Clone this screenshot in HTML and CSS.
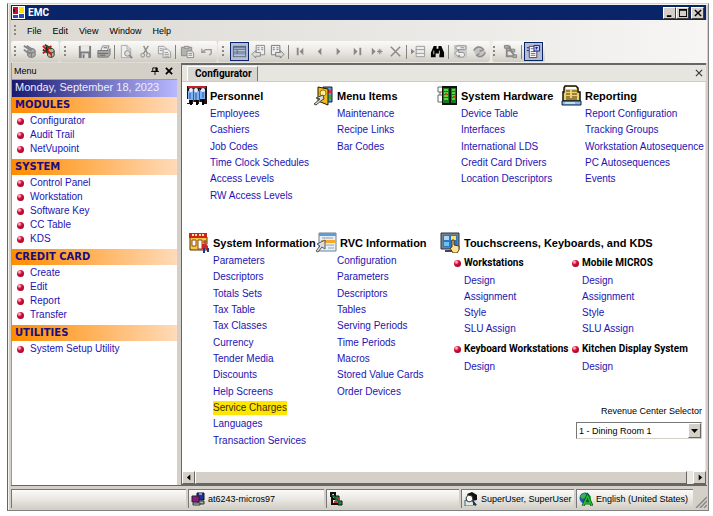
FILE: index.html
```html
<!DOCTYPE html>
<html lang="en">
<head>
<meta charset="utf-8">
<title>EMC</title>
<link rel="stylesheet" href="styles.css">
</head>
<body>
<div class="window">
  <header class="titlebar">
    <svg class="app-icon" viewBox="0 0 13 13"><path fill="#fff" d="M0 0h13v13H0z"/><path fill="#c8102e" d="M1 1h5v7H1z"/><path fill="#ffe000" d="M7 1h5v6H7z"/><path fill="#2848c8" d="M1 9h5v3H1zM7 8h5v4H7z"/><path fill="#222" d="M1 3h2v3H1z"/></svg>
    <h1 class="title">EMC</h1>
    <div class="caption-buttons">
      <button class="caption" aria-label="Minimize"><svg viewBox="0 0 9 9"><path d="M1 7h5v2H1z"/></svg></button>
      <button class="caption" aria-label="Maximize"><svg viewBox="0 0 9 9"><path d="M0 0h9v9H0zM1 2v6h7V2z" fill-rule="evenodd"/></svg></button>
      <button class="caption close" aria-label="Close"><svg viewBox="0 0 9 9"><path d="M1 1l7 7M8 1L1 8" stroke="#000" stroke-width="1.6"/></svg></button>
    </div>
  </header>

  <nav class="menubar">
    <span class="grip"></span>
    <button>File</button><button>Edit</button><button>View</button><button>Window</button><button>Help</button>
  </nav>

  <div class="toolbars">
    <div class="toolbar first">
      <span class="grip"></span>
      <button aria-label="Connect"><svg viewBox="0 0 16 16"><g fill="#aaa" stroke="#777"><path d="M6 7c0-3 8-3 8 0v5c0 3-8 3-8 0z"/><path d="M6 8c1 2 7 2 8 0M10 9v5" fill="none"/></g><path d="M2 2l8 5M2 6l6 5M5 2l6 4" stroke="#888" stroke-width="2"/></svg></button>
      <button aria-label="Disconnect"><svg viewBox="0 0 16 16"><path d="M7 7c0-3 7-3 7 0v5c0 3-7 3-7 0z" fill="#bdb69b" stroke="#333"/><path d="M7 8c1 2 6 2 7 0M11 10v4" stroke="#333" fill="none"/><path d="M4 1l7 4M2 6l6 4" stroke="#174f22" stroke-width="2"/><path d="M2 2l9 9M11 2L2 10" stroke="#d01010" stroke-width="2"/><path d="M6 3v5" stroke="#222" stroke-width="2"/></svg></button>
    </div>
    <div class="toolbar edit">
      <span class="grip"></span>
      <button aria-label="Save"><svg viewBox="0 0 16 16"><path d="M2 2h13v13H2z" fill="#7d7d7d"/><path d="M4 2h9v6H4z" fill="#e8e8e6"/><path d="M5 10h7v5H5z" fill="#ddd"/><path d="M6 11h2v4H6z" fill="#777"/></svg></button>
      <button aria-label="Print"><svg viewBox="0 0 16 16"><path d="M5 7l2-5h7l-2 5z" fill="#eee" stroke="#888"/><path d="M2 7h11l2-2v6l-2 3H2z" fill="#aaa" stroke="#777"/><path d="M2 10h11M4 12h6M8 4h4" stroke="#666"/></svg></button>
      <i class="sep"></i>
      <button aria-label="Print preview"><svg viewBox="0 0 16 16"><path d="M2.500 1.500h6l4 4v9h-10zM8.500 1.500v4h4" fill="#eee" stroke="#aaa"/><circle cx="9" cy="10" r="3" fill="#ddd" stroke="#888"/><path d="M11 12l3 3" stroke="#888" stroke-width="2"/></svg></button>
      <button aria-label="Cut"><svg viewBox="0 0 16 16" fill="none" stroke="#888"><path d="M6 2l4 8M11 2L6 10" stroke-width="1.400"/><circle cx="5" cy="12" r="2"/><circle cx="11" cy="12" r="2"/></svg></button>
      <button aria-label="Copy"><svg viewBox="0 0 16 16" fill="#eee" stroke="#999"><path d="M1.500 2.500h6l2 2v6h-8z"/><path d="M6.500 5.500h5l3 3v6h-8z"/><path d="M3 5h3M3 7h3M8 9h4M8 11h5M8 13h5"/></svg></button>
      <i class="sep"></i>
      <button aria-label="Paste"><svg viewBox="0 0 16 16" stroke="#888"><path d="M1.500 3.500h11v9h-11z" fill="#b2b2b0"/><path d="M4.500 4.500v-2h5v2z" fill="#ddd"/><path d="M7.500 7.500h5l2 2v5h-7z" fill="#eee"/><path d="M9 10h4M9 12h4"/></svg></button>
      <button aria-label="Undo"><svg viewBox="0 0 16 16" fill="none" stroke="#999"><path d="M3 9l4-3h6v4l-2 2M3 5v4h4" stroke-width="1.400"/></svg></button>
    </div>
    <div class="toolbar">
      <span class="grip"></span>
      <button class="on" aria-label="Table view"><svg viewBox="0 0 16 16"><path d="M1 2h14v12H1z" fill="#5b6784"/><path d="M2 4h12v1H2zM2 6h3v2H2zM6 6h8v2H6zM2 9h3v1H2zM6 9h8v1H6zM2 11h12v2H2z" fill="#b8c3da"/></svg></button>
      <button aria-label="Previous form"><svg viewBox="0 0 16 16"><path d="M5.500 1.500h9v10h-9z" fill="#eee" stroke="#888"/><path d="M7 4h2M11 4h2M7 6h2M11 6h2" stroke="#777"/><path d="M1 11l4-4v2h5v4H5v2z" fill="#ddd" stroke="#888"/></svg></button>
      <button aria-label="Next form"><svg viewBox="0 0 16 16"><path d="M1.500 1.500h9v10h-9z" fill="#eee" stroke="#777"/><path d="M3 4h2M7 4h2M3 6h2M7 6h2" stroke="#777"/><path d="M15 11l-4-4v2H6v4h5v2z" fill="#ddd" stroke="#777"/></svg></button>
      <i class="sep"></i>
      <button aria-label="First"><svg viewBox="0 0 16 16" fill="#888"><path d="M4 4h2v8H4zM11 4v8L7 8z"/></svg></button>
      <button aria-label="Previous"><svg viewBox="0 0 16 16" fill="#888"><path d="M10 4v8L6 8z"/></svg></button>
      <button aria-label="Next"><svg viewBox="0 0 16 16" fill="#888"><path d="M6 4v8l4-4z"/></svg></button>
      <button aria-label="Last"><svg viewBox="0 0 16 16" fill="#888"><path d="M4 4v8l4-4zM10 4h2v8h-2z"/></svg></button>
      <button aria-label="New record"><svg viewBox="0 0 16 16" fill="#888"><path d="M3 4v8l4-4z"/><path d="M11.500 5v6M8.500 8h6M9.500 6l4 4M13.500 6l-4 4" stroke="#888"/></svg></button>
      <button aria-label="Delete"><svg viewBox="0 0 16 16"><path d="M3 3l10 10M13 3L3 13" stroke="#888" stroke-width="1.500"/></svg></button>
      <i class="sep"></i>
      <button aria-label="Insert row"><svg viewBox="0 0 16 16"><path d="M5.500 2.500h9v11h-9zM5 6h9M5 10h9" fill="#eee" stroke="#999"/><path d="M0 5l4 3-4 3z" fill="#888"/></svg></button>
      <button aria-label="Find"><svg viewBox="0 0 16 16"><path d="M4 2h3v3h2V2h3l3 7v5h-5v-4H6v4H1V9z" fill="#000"/><path d="M4 7v4M10 7v4" stroke="#ccc"/></svg></button>
      <i class="sep"></i>
      <button aria-label="Routing"><svg viewBox="0 0 16 16" fill="#eee" stroke="#888"><path d="M1 1h14v14H1z" fill="#ccc" stroke="none"/><rect x="3" y="2" width="11" height="4" rx="2"/><path d="M2 10l4-4v3h4c3 0 3 5 0 5H7v-2H6v2z"/><path d="M8 4h4"/></svg></button>
      <button aria-label="Refresh"><svg viewBox="0 0 16 16"><path d="M1 6l6-4 6 3 2 5-4 5-6-2z" fill="#c4c4c2"/><path d="M2 7c2-5 8-5 10-1l-4 2M14 9c-1 4-6 6-9 3l3-2" fill="none" stroke="#8c8c8c" stroke-width="1.600"/></svg></button>
    </div>
    <div class="toolbar last">
      <span class="grip"></span>
      <button aria-label="Hierarchy"><svg viewBox="0 0 16 16" fill="#aaa" stroke="#888"><path d="M4 1v12h10M4 7h6" fill="none" stroke-width="2"/><path d="M1.500 1.500h5v3h-5zM8.500 5.500h4v3h-4zM10.500 11.500h4v3h-4z"/><path d="M6 4l6 8M7 2l1 4" stroke-width="2"/></svg></button>
      <i class="sep"></i>
      <button class="on" aria-label="Properties"><svg viewBox="0 0 16 16"><path d="M3.500 2.500h8v12h-8z" fill="#fff" stroke="#444"/><path d="M5 5h3M5 8h5M5 10h5M5 12h5" stroke="#667"/><path d="M8.500 1.500h6v6h-6z" fill="#cfd6f2" stroke="#11119b"/><path d="M10 4h3M11 3v3M1 4h2M1 7h2" stroke="#11119b"/></svg></button>
    </div>
  </div>

  <div class="body">
    <aside class="sidebar">
      <div class="panel-head">
        <h2>Menu</h2>
        <button aria-label="Pin"><svg viewBox="0 0 9 9"><path d="M2 1h5v4H2zM0 5h9M4.500 5v4" fill="none" stroke="#000"/><path d="M5 1h2v4H5z"/></svg></button>
        <button aria-label="Close menu"><svg viewBox="0 0 9 9"><path d="M1 1l7 7M8 1L1 8" stroke="#000" stroke-width="2"/></svg></button>
      </div>
      <p class="date">Monday, September 18, 2023</p>
      <h3>MODULES</h3>
      <ul><li><a href="#">Configurator</a></li><li><a href="#">Audit Trail</a></li><li><a href="#">NetVupoint</a></li></ul>
      <h3>SYSTEM</h3>
      <ul><li><a href="#">Control Panel</a></li><li><a href="#">Workstation</a></li><li><a href="#">Software Key</a></li><li><a href="#">CC Table</a></li><li><a href="#">KDS</a></li></ul>
      <h3>CREDIT CARD</h3>
      <ul><li><a href="#">Create</a></li><li><a href="#">Edit</a></li><li><a href="#">Report</a></li><li><a href="#">Transfer</a></li></ul>
      <h3>UTILITIES</h3>
      <ul><li><a href="#">System Setup Utility</a></li></ul>
    </aside>

    <main class="main">
      <div class="tabs">
        <button class="tab">Configurator</button>
        <button class="tab-close" aria-label="Close tab"><svg viewBox="0 0 9 9"><path d="M1 1l7 7M8 1L1 8" stroke="#333" stroke-width="1.200"/></svg></button>
      </div>
      <div class="content">
        <div class="row top">
          <section>
            <h2><svg viewBox="0 0 21 21"><path d="M1 1h20v18H1z" fill="#201414"/><path d="M2 1h18v2H2z" fill="#c52020"/><path d="M7 4h1v14H7zM13 4h1v13h-1z" fill="#a33"/><g fill="#7fb2ee"><path d="M2 6h5v9H2zM8 6h5v9H8zM14 5h5v9h-5z"/></g><g fill="#e8f2ff"><circle cx="5" cy="5" r="2"/><circle cx="10" cy="5" r="2"/><circle cx="17" cy="5" r="2"/></g><path d="M4 8v6M10 8v7M17 7v6" stroke="#2a55a8"/><path d="M0 14h3v4H0zM7 17h3v4H7zM13 17h3v4h-3zM0 19h4v2H0z" fill="#fff"/><path d="M5 15v5M11 15v5M17 14v6" stroke="#000" stroke-width="2"/></svg>Personnel</h2>
            <ul class="six"><li><a href="#">Employees</a></li><li><a href="#">Cashiers</a></li><li><a href="#">Job Codes</a></li><li><a href="#">Time Clock Schedules</a></li><li><a href="#">Access Levels</a></li><li><a href="#">RW Access Levels</a></li></ul>
          </section>
          <section>
            <h2><svg viewBox="0 0 21 21"><path d="M10 2h9v15h-9z" fill="#4c9ad8" stroke="#123"/><path d="M15 5h3v3h-3z" fill="#dd3030"/><path d="M15 10h3v4h-3z" fill="#3faa44"/><path d="M5 2l10 2v16L5 16z" fill="#f2b818" stroke="#221a00"/><circle cx="10" cy="8" r="3" fill="#fff2a0" stroke="#a86a00"/><path d="M1 19l6-5-4-1 7-3 1 4-2 1-6 5z" fill="#ddd" stroke="#444"/></svg>Menu Items</h2>
            <ul class="six"><li><a href="#">Maintenance</a></li><li><a href="#">Recipe Links</a></li><li><a href="#">Bar Codes</a></li></ul>
          </section>
          <section>
            <h2><svg viewBox="0 0 21 21"><path d="M5 1h15v19H5z" fill="#111"/><path d="M6 3h6v15H6zM14 3h5v15h-5z" fill="#157a20"/><path d="M7 5h4M7 8h4M7 11h4M7 14h4M15 5h3M15 8h3M15 11h3M15 14h3" stroke="#7cf04c" stroke-width="1.500"/><path d="M9 8v2M17 11v2" stroke="#e03a20" stroke-width="2"/><path d="M5 2H1v5h4M5 10H1v7h4M3 7v3" fill="none" stroke="#666"/></svg>System Hardware</h2>
            <ul class="six"><li><a href="#">Device Table</a></li><li><a href="#">Interfaces</a></li><li><a href="#">International LDS</a></li><li><a href="#">Credit Card Drivers</a></li><li><a href="#">Location Descriptors</a></li></ul>
          </section>
          <section>
            <h2><svg viewBox="0 0 21 21"><path d="M4 1h11l2 2v4h2v9H2V7h1V3z" fill="#eed070" stroke="#111" stroke-width="1.500"/><path d="M5 2h10v2H5z" fill="#fff"/><path d="M5 6h4M11 6h5M5 9h4M11 9h5M5 12h4M11 12h5M5 14h11" stroke="#4a3200"/><path d="M1 16h19v4H1z" fill="#85b8e4" stroke="#0a2038"/><path d="M4 18h10" stroke="#fff"/></svg>Reporting</h2>
            <ul class="six"><li><a href="#">Report Configuration</a></li><li><a href="#">Tracking Groups</a></li><li><a href="#">Workstation Autosequence</a></li><li><a href="#">PC Autosequences</a></li><li><a href="#">Events</a></li></ul>
          </section>
        </div>
        <div class="row bottom">
          <section>
            <h2><svg viewBox="0 0 21 21"><path d="M1 5h17v13H1z" fill="#f5c742" stroke="#5a3300"/><path d="M0 1h18v5H0z" fill="#cf2415"/><path d="M3 3h2M6 3h2M10 3h2M13 3h2" stroke="#ffd9b0" stroke-width="2"/><path d="M3 8h4v6H3zM9 8h4v9H9z" fill="#fff" stroke="#8a4a10"/><circle cx="16" cy="10" r="2" fill="#a35c35"/><path d="M13 12h6v5h-6z" fill="#d32323"/><path d="M14 16h2v5h-2zM18 16h2v4h-2z" fill="#203a91"/><path d="M18 12l2 3" stroke="#fff"/></svg>System Information</h2>
            <ul class="twelve"><li><a href="#">Parameters</a></li><li><a href="#">Descriptors</a></li><li><a href="#">Totals Sets</a></li><li><a href="#">Tax Table</a></li><li><a href="#">Tax Classes</a></li><li><a href="#">Currency</a></li><li><a href="#">Tender Media</a></li><li><a href="#">Discounts</a></li><li><a href="#">Help Screens</a></li><li><a class="marked" href="#">Service Charges</a></li><li><a href="#">Languages</a></li><li><a href="#">Transaction Services</a></li></ul>
          </section>
          <section>
            <h2><svg viewBox="0 0 21 21"><path d="M3 1h17v18H3z" fill="#e5f0fa" stroke="#6d8093"/><path d="M3 1h17v3H3z" fill="#5f9cd3"/><path d="M6 6h11" stroke="#999"/><path d="M5 8h15v3H5z" fill="#f7a828"/><path d="M10 13h8M12 16h6" stroke="#8aa" /><path d="M9 8v9l-3-2-4 5-2-1 4-5-3-2z" fill="#ddd" stroke="#555"/></svg>RVC Information</h2>
            <ul class="twelve tight"><li><a href="#">Configuration</a></li><li><a href="#">Parameters</a></li><li><a href="#">Descriptors</a></li><li><a href="#">Tables</a></li><li><a href="#">Serving Periods</a></li><li><a href="#">Time Periods</a></li><li><a href="#">Macros</a></li><li><a href="#">Stored Value Cards</a></li><li><a href="#">Order Devices</a></li></ul>
          </section>
          <section>
            <h2><svg viewBox="0 0 21 21"><path d="M1 1h18v16H1z" fill="#73808e" stroke="#2c3640"/><path d="M3 3h14v12H3z" fill="#2e74c4"/><path d="M4 4h5v4H4z" fill="#a8d8f5"/><path d="M11 4h5v4h-5z" fill="#f5e266"/><path d="M4 10h5v4H4z" fill="#6cc4e8"/><path d="M5 18h11v2H5z" fill="#445"/><path d="M12 8l2 0v5l5 1v4l-2 3h-4l-3-5 2-1z" fill="#ffe09a" stroke="#5a3a00"/></svg>Touchscreens, Keyboards, and KDS</h2>
            <div class="groups">
              <div class="group"><h3>Workstations</h3><ul><li><a href="#">Design</a></li><li><a href="#">Assignment</a></li><li><a href="#">Style</a></li><li><a href="#">SLU Assign</a></li></ul></div>
              <div class="group"><h3>Mobile MICROS</h3><ul><li><a href="#">Design</a></li><li><a href="#">Assignment</a></li><li><a href="#">Style</a></li><li><a href="#">SLU Assign</a></li></ul></div>
              <div class="group"><h3>Keyboard Workstations</h3><ul><li><a href="#">Design</a></li></ul></div>
              <div class="group"><h3>Kitchen Display System</h3><ul><li><a href="#">Design</a></li></ul></div>
            </div>
            <div class="selector">
              <label for="rvc">Revenue Center Selector</label>
              <div class="select-box">
                <select id="rvc"><option>1 - Dining Room 1</option></select>
                <span class="drop"><svg viewBox="0 0 7 4"><path d="M0 0h7L3.500 4z"/></svg></span>
              </div>
            </div>
          </section>
        </div>
      </div>
      <div class="scrollbar">
        <button aria-label="Scroll left"><svg viewBox="0 0 7 7"><path d="M5 0v7L1 3.500z"/></svg></button>
        <span class="thumb"></span>
        <button aria-label="Scroll right"><svg viewBox="0 0 7 7"><path d="M2 0v7l4-3.500z"/></svg></button>
      </div>
    </main>
  </div>

  <footer class="statusbar">
    <div class="pane message"></div>
    <div class="pane host"><svg viewBox="0 0 14 14"><path d="M6 1h7v7H6z" fill="#1d2f9c" stroke="#112"/><path d="M7 9h6v3H7z" fill="#aaa" stroke="#333"/><path d="M1 4h7v6H1z" fill="#8d1689" stroke="#222"/><path d="M2 11h7v2H2z" fill="#ccc" stroke="#333"/><path d="M8 2h3" stroke="#fff"/></svg>at6243-micros97</div>
    <div class="pane task"><svg viewBox="0 0 14 14"><path d="M2 1h4v3H2zM3 4v8h9M3 7h5" fill="none" stroke="#111" stroke-width="2"/><path d="M6 4h4v4H6zM9 9h4v4H9z" fill="#139247" stroke="#111"/><path d="M3 3l8 7" stroke="#126b33" stroke-width="2"/><path d="M5 9h3v2H5zM9 6h2v2H9z" fill="#d03030"/></svg></div>
    <div class="pane user"><svg viewBox="0 0 14 14"><path d="M3 2l5-2 5 3v5l-5 1z" fill="#111"/><path d="M4 3l4 1 1 4-3 2-3-1-1-3z" fill="#fff" stroke="#333"/><path d="M1 8l4 2 3-1 4 5H1z" fill="#e8e8e8" stroke="#3b6470"/><path d="M9 8l4 5h-4z" fill="#173a55"/></svg>SuperUser, SuperUser</div>
    <div class="pane lang"><svg viewBox="0 0 14 14"><circle cx="6" cy="6" r="5.500" fill="#1c53b4"/><path d="M1 4l4-3 3 2-2 3-3 1zM8 5l4-1v4z" fill="#3cb24a"/><path d="M4 14L8.500 4 13 14M6 11h5" fill="none" stroke="#065e12" stroke-width="3"/><path d="M4 14L8.500 4 13 14M6 11h5" fill="none" stroke="#28bd3e" stroke-width="1.500"/></svg>English (United States)</div>
    <svg class="resize" viewBox="0 0 12 12"><path d="M1 12L12 1M5 12l7-7M9 12l3-3" stroke="#888" stroke-width="1.500"/></svg>
  </footer>
</div>
</body>
</html>
```
FILE: styles.css
```css
* { box-sizing: border-box; }

body {
  margin: 0;
  height: 100vh;
  padding: 3px 4px 5px 7px;
  background: #fff;
  font: 10px/16px "Liberation Sans", Arial, sans-serif;
  color: #000;
}

h1, h2, h3, p, ul { margin: 0; padding: 0; }
ul { list-style: none; }
a { color: #1c14b4; text-decoration: none; }
button {
  display: flex;
  align-items: center;
  justify-content: center;
  padding: 0;
  border: 0;
  background: none;
  font: inherit;
  color: inherit;
}
svg { display: block; flex: none; }

.window {
  height: 100%;
  display: flex;
  flex-direction: column;
  padding: 1px 1px 2px 3px;
  background: #d4d0c8;
  border: 1px solid #808080;
  border-left-color: #3f6ea8;
  border-top-color: #d4d0c8;
  box-shadow: inset 1px 1px #f4f3f0;
}

/* Title bar */
.titlebar {
  display: flex;
  align-items: center;
  gap: 3px;
  height: 15px;
  margin-right: 1px;
  padding: 0 2px 0 1px;
  background: #0a246a;
  color: #fff;
}
.app-icon { width: 13px; height: 13px; }
.title { flex: 1; font: bold 10px/15px Roboto, "Liberation Sans", sans-serif; }
.caption-buttons { display: flex; }
.caption {
  width: 13px;
  height: 12px;
  background: #d4d0c8;
  border: 1px solid;
  border-color: #fff #404040 #404040 #fff;
}
.caption.close { margin-left: 2px; }
.caption svg { width: 8px; height: 8px; }

/* Menu bar and toolbars */
.menubar, .toolbars { background: linear-gradient(90deg, #dcd9d2, #eeedea 75%, #f7f6f4); }
.menubar { display: flex; align-items: center; height: 21px; padding-left: 3px; font-size: 9px; }
.menubar button { margin-right: 11px; }
.menubar .grip { margin-right: 11px; }
.grip {
  flex: none;
  width: 2px;
  height: 12px;
  background: repeating-linear-gradient(#8a8780 0 2px, transparent 2px 4px);
}
.toolbars { display: flex; height: 22px; padding-bottom: 1px; }
.toolbar {
  display: flex;
  align-items: center;
  margin-right: 1px;
  padding: 0 1px 0 4px;
  border-radius: 3px;
  background: linear-gradient(#fbfaf9, #eae8e3 50%, #d0ccc3);
}
.toolbar.first { padding-left: 3px; }
.toolbar.last { margin-left: 1px; padding: 0 2px 0 1px; }
.toolbar .grip { margin-right: 6px; }
.toolbar.first .grip { margin-right: 4px; }
.toolbar.edit .grip { margin-right: 9px; }
.toolbar button { width: 19px; height: 19px; }
.toolbar svg { width: 15px; height: 15px; }
.toolbar .on { border: 1px solid #0a246a; background: #b6bdd2; }
.sep { width: 1px; height: 14px; margin: 0 2px 0 1px; background: #85827b; }

/* Work area */
.body { flex: 1; display: flex; min-height: 0; gap: 4px; padding-right: 1px; }
.sidebar { flex: none; width: 166px; background: #fff; border-left: 1px solid #999; }
.panel-head {
  display: flex;
  align-items: center;
  gap: 6px;
  height: 17px;
  padding: 0 4px 0 2px;
  background: #d4d0c8;
  border-bottom: 1px solid #999;
}
.panel-head h2 { flex: 1; font-size: 9px; font-weight: 400; }
.panel-head svg { width: 8px; height: 8px; }
.date {
  height: 17px;
  padding-left: 3px;
  background: linear-gradient(90deg, #191970, #b8b8ff);
  color: #eef;
  font-size: 11px;
  line-height: 14px;
}
.sidebar h3 {
  height: 16px;
  padding-left: 3px;
  background: linear-gradient(90deg, #ff8c00, #ffdab9);
  color: #1a0d80;
  font: bold 10px/15px "DejaVu Sans", Verdana, sans-serif;
}
.sidebar ul { padding: 1px 0 3px 5px; }
.sidebar li { line-height: 14px; }
.sidebar li, .group h3 { display: flex; align-items: center; gap: 6px; }
.sidebar li::before, .group h3::before {
  content: "";
  flex: none;
  width: 7px;
  height: 7px;
  border-radius: 50%;
  background: radial-gradient(circle at 35% 30%, #ffb0c0 0 10%, #d8103c 35%, #7c0020);
}

.main {
  flex: 1;
  min-width: 0;
  display: flex;
  flex-direction: column;
  border: 1px solid #666;
  border-width: 2px 0 1px 1px;
}
.tabs {
  display: flex;
  align-items: flex-end;
  height: 17px;
  flex: none;
  padding: 0 3px 0 5px;
  background: #e7e5e0;
  border-bottom: 1px solid #cfcbc3;
}
.tab {
  height: 15px;
  padding: 0 5px 0 7px;
  background: #d9d6cf;
  border: solid;
  border-color: #fff #777 #777 #fff;
  border-width: 1px 1px 0 1px;
  font: bold 10px/14px Roboto, "Liberation Sans", sans-serif;
}
.tab-close { height: 16px; margin-left: auto; }
.tab-close svg { width: 8px; height: 8px; }

.content {
  flex: 1;
  min-height: 0;
  overflow: hidden;
  padding-top: 3px;
  background: #fff;
  border-right: 1px solid #e8e6e1;
}
.row { display: grid; white-space: nowrap; }
.row.top { grid-template-columns: 127px 124px 124px 1fr; padding-left: 4px; margin-bottom: 28px; }
.row.bottom { grid-template-columns: 127px 124px 1fr; padding-left: 7px; }
.row h2 {
  display: flex;
  align-items: center;
  gap: 3px;
  height: 21px;
  font-size: 11px;
}
.row h2 svg { width: 21px; height: 21px; }
.row li { display: flex; align-items: center; }
.six, .twelve { display: grid; padding-left: 24px; }
.six { height: 98px; grid-template-rows: repeat(6, 1fr); }
.twelve { height: 196px; grid-template-rows: repeat(12, 1fr); }
.tight { padding-left: 21px; }
.marked { background: #ffe600; color: #33300a; line-height: 14px; }

.groups { display: grid; grid-template-columns: 118px 1fr; row-gap: 2px; padding-left: 14px; }
.group h3 { gap: 3px; height: 20px; font: bold 10px/16px Roboto, "Liberation Sans", sans-serif; }
.group ul { padding-left: 10px; }
.selector {
  display: flex;
  flex-direction: column;
  align-items: flex-end;
  gap: 3px;
  margin-top: 28px;
  padding-right: 3px;
  font-size: 9px;
}
.select-box { display: flex; width: 126px; height: 17px; border: 1px solid; border-color: #777 #d4d0c8 #d4d0c8 #777; }
.select-box select {
  flex: 1;
  min-width: 0;
  appearance: none;
  border: 0;
  padding: 0 2px;
  background: #fff;
  color: #000;
  font: inherit;
}
.drop, .scrollbar button, .thumb {
  background: #d4d0c8;
  border: 1px solid;
  border-color: #fff #666 #666 #fff;
}
.drop { display: flex; align-items: center; justify-content: center; width: 13px; }
.drop svg { width: 7px; height: 4px; }

.scrollbar { flex: none; display: flex; height: 13px; background: #eae8e4; }
.scrollbar button { width: 13px; }
.scrollbar svg { width: 6px; height: 7px; }
.thumb { flex: 1; margin-right: 6px; }

/* Status bar */
.statusbar {
  display: flex;
  gap: 2px;
  height: 23px;
  padding-top: 3px;
  border-top: 1px solid #666;
  font-size: 9px;
}
.pane {
  display: flex;
  align-items: center;
  gap: 3px;
  min-width: 0;
  padding-left: 2px;
  border: solid #777;
  border-width: 1px 0 0 1px;
  background: linear-gradient(#fbfaf9, #eae8e3 50%, #d4d0c8);
  white-space: nowrap;
}
.pane svg { width: 14px; height: 14px; }
.message { flex: 175 1 0; }
.host { flex: 136 1 0; }
.task { flex: 132 1 0; }
.user { flex: 112 1 0; }
.lang { flex: 116 1 0; }
.resize { width: 12px; height: 12px; align-self: flex-end; }
```
